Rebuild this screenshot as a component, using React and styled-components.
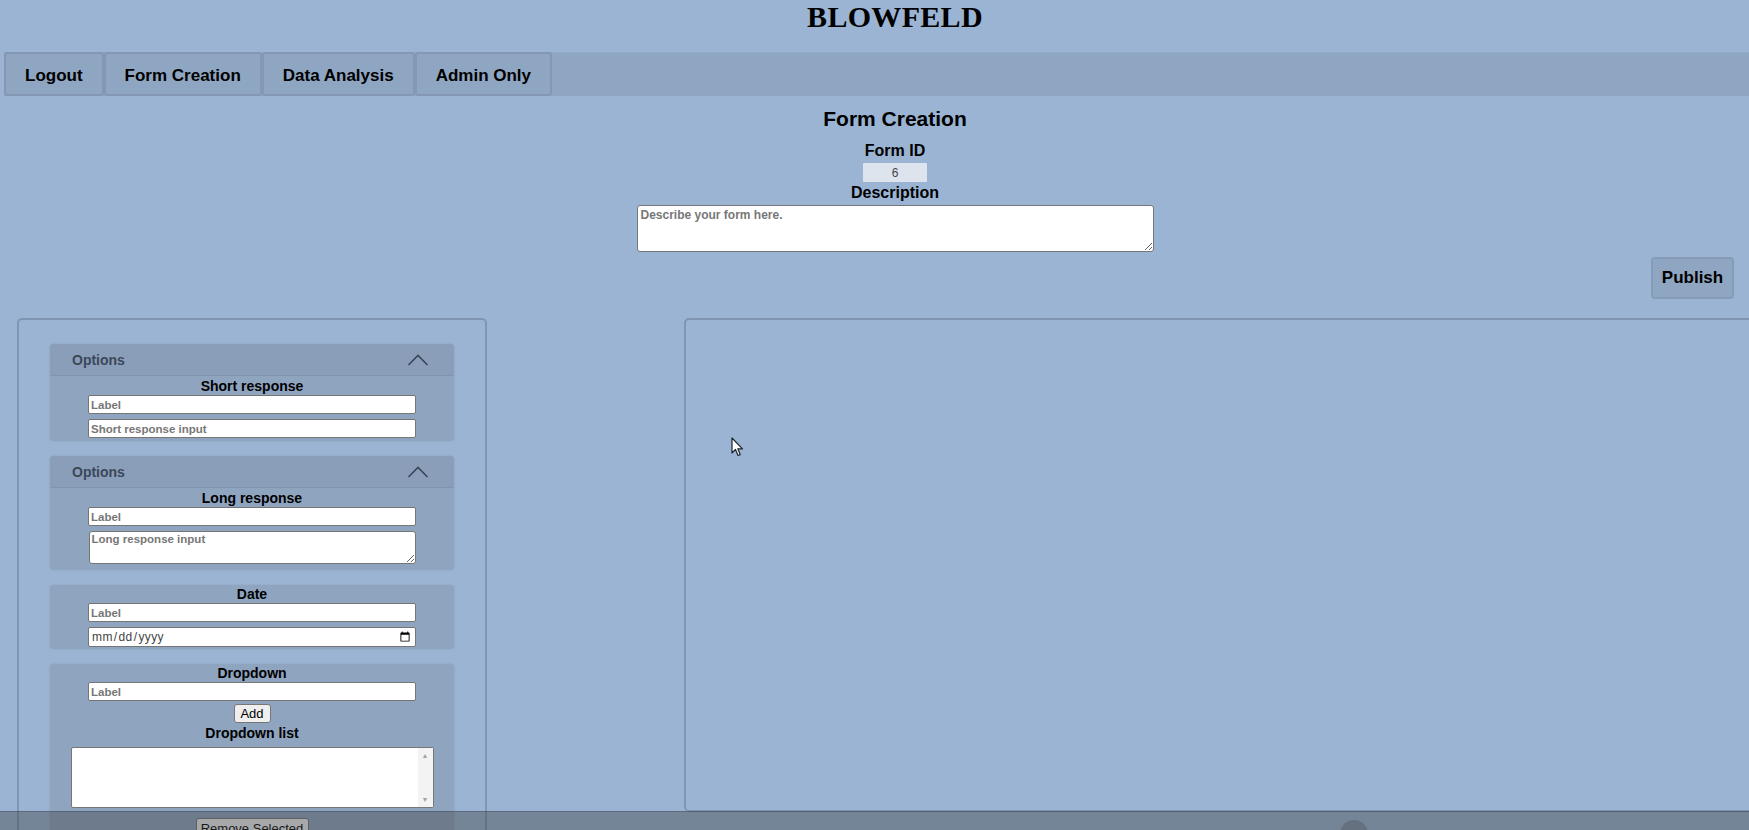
import React from 'react'
import styled, { createGlobalStyle } from 'styled-components'

const GlobalStyle = createGlobalStyle`
  html, body {
    margin: 0;
    padding: 0;
    height: 100%;
    overflow: hidden;
    background: #9bb4d3;
  }
  body {
    font-family: "Liberation Sans", Arial, sans-serif;
    color: #000;
  }
  input::placeholder, textarea::placeholder {
    color: #777;
    font-weight: bold;
  }
`;

const App = () => {
  return (
    <Page>
      <GlobalStyle />
      <TitleBar>
        <Title>BLOWFELD</Title>
      </TitleBar>
      <Nav>
        <NavButton>Logout</NavButton>
        <NavButton>Form Creation</NavButton>
        <NavButton>Data Analysis</NavButton>
        <NavButton>Admin Only</NavButton>
      </Nav>

      <Center>
        <Heading>Form Creation</Heading>
        <FieldLabel top={11}>Form ID</FieldLabel>
        <IdInput value="6" disabled readOnly />
        <FieldLabel top={2}>Description</FieldLabel>
        <DescArea placeholder="Describe your form here." />
      </Center>

      <PublishRow>
        <PublishButton>Publish</PublishButton>
      </PublishRow>

      <Panels>
        <LeftPanel>
          <Card pb={3}>
            <CardHeader>
              <span>Options</span>
              <Chevron />
            </CardHeader>
            <CardTitle>Short response</CardTitle>
            <TextInput placeholder="Label" />
            <TextInput placeholder="Short response input" gap={5} />
          </Card>

          <Card pb={6}>
            <CardHeader>
              <span>Options</span>
              <Chevron />
            </CardHeader>
            <CardTitle>Long response</CardTitle>
            <TextInput placeholder="Label" />
            <LongArea placeholder="Long response input" />
          </Card>

          <Card pb={2}>
            <CardTitle first>Date</CardTitle>
            <TextInput placeholder="Label" />
            <DateInput type="date" />
          </Card>

          <Card pb={6}>
            <CardTitle first>Dropdown</CardTitle>
            <TextInput placeholder="Label" />
            <SmallButton>Add</SmallButton>
            <CardTitle>Dropdown list</CardTitle>
            <ListWrap>
              <ListBox multiple />
              <ListScroll>
                <ScrollArrow>▲</ScrollArrow>
                <ScrollArrow>▼</ScrollArrow>
              </ListScroll>
            </ListWrap>
            <RemoveButton>Remove Selected</RemoveButton>
          </Card>
        </LeftPanel>
        <RightPanel />
      </Panels>

      <Cursor>
        <svg width="13" height="20" viewBox="0 0 13 20">
          <path d="M1 1 L1 16 L4.5 12.5 L7 18.5 L9.2 17.6 L6.8 11.8 L11.5 11.8 Z"
            fill="#fff" stroke="#1c2430" strokeWidth="1.2" strokeLinejoin="round" />
        </svg>
      </Cursor>

      <BottomShade>
        <Knob />
      </BottomShade>
    </Page>
  )
}

const Chevron = () => (
  <svg width="22" height="12" viewBox="0 0 22 12">
    <polyline points="1.5,11 11,1.5 20.5,11" fill="none" stroke="#3b4859" strokeWidth="1.6" />
  </svg>
)

export default App;

const Page = styled.div`
  width: 1749px;
  min-height: 830px;
  position: relative;
`;

const TitleBar = styled.div`
  height: 52px;
  padding-left: 41px;
  display: flex;
  justify-content: center;
`;

const Title = styled.h1`
  margin: 0;
  font-family: "Liberation Serif", "Times New Roman", serif;
  font-size: 30px;
  font-weight: bold;
  line-height: 34px;
  letter-spacing: 0.3px;
`;

const Nav = styled.div`
  margin-left: 4px;
  height: 44px;
  display: flex;
  background: #8fa6c2;
  border-top: 1px solid #94abc7;
  box-sizing: border-box;
`;

const NavButton = styled.button`
  height: 44px;
  margin-top: -1px;
  padding: 4px 19px 0;
  background: #8fa6c2;
  border: 2px solid #8498b5;
  border-radius: 3px;
  font-family: "Liberation Sans", Arial, sans-serif;
  font-size: 17px;
  font-weight: bold;
  color: #000;
`;

const Center = styled.div`
  display: flex;
  flex-direction: column;
  align-items: center;
  padding-left: 41px;
`;

const Heading = styled.h2`
  margin: 11px 0 0;
  font-size: 21px;
  line-height: 24px;
  font-weight: bold;
`;

const FieldLabel = styled.div`
  margin-top: ${p => p.top}px;
  font-size: 16px;
  line-height: 18px;
  font-weight: bold;
`;

const IdInput = styled.input`
  margin-top: 3px;
  width: 64px;
  height: 19px;
  box-sizing: border-box;
  border: none;
  border-radius: 1px;
  background: #dde4ee;
  text-align: center;
  font-family: "Liberation Sans", Arial, sans-serif;
  font-size: 12px;
  color: #444;
  padding: 0;
`;

const DescArea = styled.textarea`
  margin-top: 3px;
  width: 517px;
  height: 47px;
  box-sizing: border-box;
  border: 1px solid #767676;
  border-radius: 3px;
  padding: 2px 3px;
  font-family: "Liberation Sans", Arial, sans-serif;
  font-size: 12px;
  font-weight: bold;
  resize: both;
`;

const PublishRow = styled.div`
  display: flex;
  justify-content: flex-end;
  padding-right: 15px;
  margin-top: 5px;
`;

const PublishButton = styled.button`
  width: 83px;
  height: 42px;
  background: #8fa6c2;
  border: 2px solid #869bb8;
  border-radius: 4px;
  font-family: "Liberation Sans", Arial, sans-serif;
  font-size: 17px;
  font-weight: bold;
  color: #000;
  padding: 0;
`;

const Panels = styled.div`
  display: flex;
  align-items: flex-start;
  gap: 197px;
  padding-left: 17px;
  margin-top: 19px;
`;

const LeftPanel = styled.div`
  width: 470px;
  flex-shrink: 0;
  box-sizing: border-box;
  border: 2px solid #7f95b2;
  border-radius: 5px;
  padding: 24px 31px 20px;
  display: flex;
  flex-direction: column;
  gap: 15px;
`;

const RightPanel = styled.div`
  width: 1100px;
  height: 494px;
  flex-shrink: 0;
  box-sizing: border-box;
  border: 2px solid #7f95b2;
  border-radius: 5px;
`;

const Card = styled.div`
  background: #8fa4bf;
  border-radius: 4px;
  box-shadow: 0 0 2px rgba(80, 100, 130, 0.25);
  display: flex;
  flex-direction: column;
  align-items: center;
  padding-bottom: ${p => p.pb}px;
  overflow: hidden;
`;

const CardHeader = styled.div`
  align-self: stretch;
  height: 32px;
  box-sizing: border-box;
  background: #8b9eb9;
  border-bottom: 1px solid #8194b0;
  display: flex;
  align-items: center;
  justify-content: space-between;
  padding: 0 25px 0 22px;
  font-size: 14px;
  font-weight: bold;
  color: #3b4859;
`;

const CardTitle = styled.div`
  margin: ${p => (p.first ? 1 : 2)}px 0 1px;
  font-size: 14px;
  line-height: 16px;
  font-weight: bold;
`;

const TextInput = styled.input`
  margin-top: ${p => p.gap || 0}px;
  width: 328px;
  height: 19px;
  box-sizing: border-box;
  border: 1px solid #767676;
  border-radius: 2px;
  padding: 0 2px;
  background: #fff;
  font-family: "Liberation Sans", Arial, sans-serif;
  font-size: 11.5px;
  font-weight: bold;
`;

const LongArea = styled.textarea`
  margin-top: 5px;
  width: 327px;
  height: 33px;
  box-sizing: border-box;
  border: 1px solid #767676;
  border-radius: 3px;
  padding: 1px 2px;
  background: #fff;
  font-family: "Liberation Sans", Arial, sans-serif;
  font-size: 11.5px;
  font-weight: bold;
`;

const DateInput = styled.input`
  margin-top: 5px;
  width: 328px;
  height: 20px;
  box-sizing: border-box;
  border: 1px solid #767676;
  border-radius: 2px;
  padding: 0 2px;
  background: #fff;
  font-family: "Liberation Sans", Arial, sans-serif;
  font-size: 12px;
  color: #444;
  letter-spacing: 0.4px;
`;

const SmallButton = styled.button`
  margin-top: 3px;
  width: 37px;
  height: 19px;
  padding: 0;
  background: #efefef;
  border: 1px solid #767676;
  border-radius: 3px;
  font-family: "Liberation Sans", Arial, sans-serif;
  font-size: 13px;
  color: #000;
`;

const ListWrap = styled.div`
  margin-top: 5px;
  width: 363px;
  height: 61px;
  box-sizing: border-box;
  border: 1px solid #767676;
  border-radius: 2px;
  background: #fff;
  display: flex;
`;

const ListBox = styled.select`
  flex: 1;
  border: none;
  outline: none;
  background: transparent;
`;

const ListScroll = styled.div`
  width: 15px;
  background: #f3f3f3;
  display: flex;
  flex-direction: column;
  justify-content: space-between;
  align-items: center;
  padding: 3px 0;
`;

const ScrollArrow = styled.span`
  font-size: 7px;
  line-height: 9px;
  color: #a3a3a3;
`;

const RemoveButton = styled(SmallButton)`
  margin-top: 10px;
  width: 113px;
  height: 20px;
`;

const Cursor = styled.div`
  position: absolute;
  left: 731px;
  top: 437px;
  width: 13px;
  height: 20px;
  pointer-events: none;
`;

const BottomShade = styled.div`
  position: fixed;
  left: 0;
  right: 0;
  bottom: 0;
  height: 18px;
  background: rgba(60, 62, 66, 0.4);
  border-top: 1px solid rgba(60, 75, 100, 0.45);
`;

const Knob = styled.div`
  position: absolute;
  left: 1340px;
  top: 8px;
  width: 28px;
  height: 28px;
  border-radius: 50%;
  background: #65717e;
`;
